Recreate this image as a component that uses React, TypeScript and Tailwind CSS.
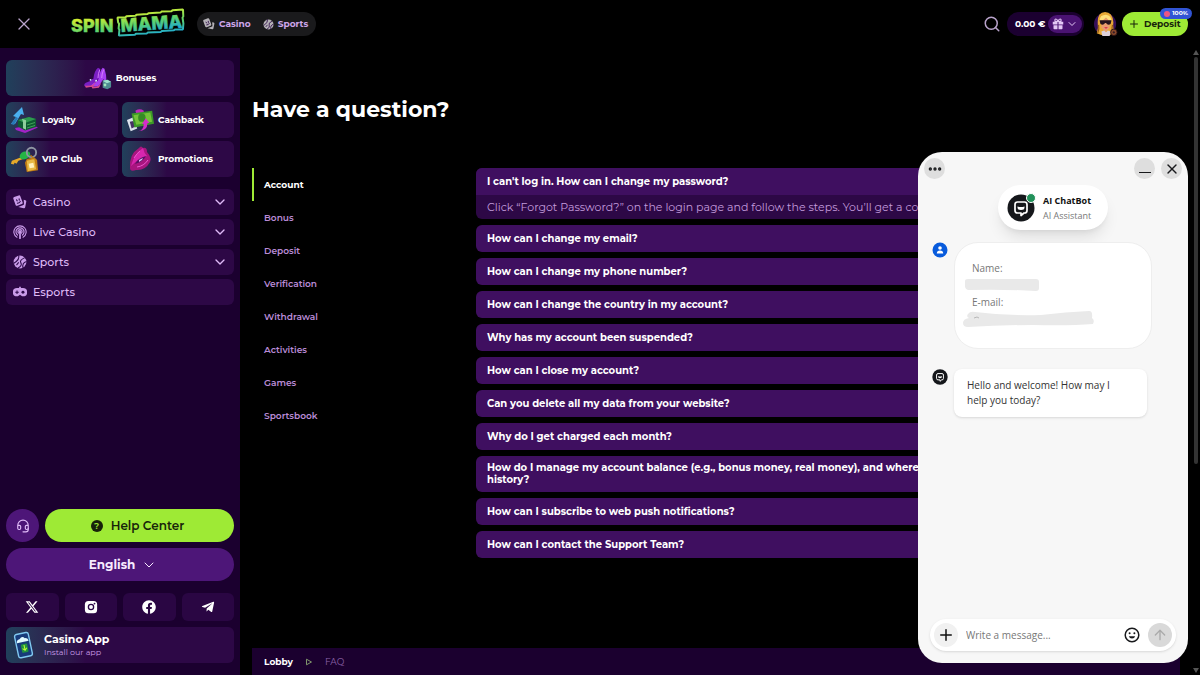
import { useState } from "react";
import { ArrowUp, ChevronDown, Ellipsis, Headset, Plus, Search, X } from "lucide-react";
import { FaTelegramPlane, FaFacebook } from "react-icons/fa";
import { FaXTwitter } from "react-icons/fa6";

type IconProps = { className?: string };

const CardsIcon = ({ className }: IconProps) => (
  <svg viewBox="0 0 16 16" className={className} aria-hidden="true">
    <rect x="1.5" y="1" width="8.5" height="10.5" rx="1.5" transform="rotate(-20 6 6.5)" fill="currentColor" />
    <path d="M12.2 5.5l2 .4a1.300 1.300 0 0 1 1 1.600l-1.300 6.500a1.300 1.300 0 0 1-1.600 1l-6.300-1.300 5.200-1.900a2 2 0 0 0 1.300-2.600z" fill="currentColor" />
    <path d="M4 5.500l.8 1.200M7 4.400l.2 1.500M5 9.300q2.400.2 3.400-2" stroke="#2a0747" strokeWidth="1.2" strokeLinecap="round" fill="none" />
  </svg>
);

const LiveIcon = ({ className }: IconProps) => (
  <svg viewBox="0 0 16 16" className={className} fill="none" stroke="currentColor" strokeWidth="1.3" strokeLinecap="round" aria-hidden="true">
    <path d="M4.500 14A7 7 0 1 1 11.500 14" />
    <path d="M5.200 11.500A4.600 4.600 0 1 1 10.800 11.500" />
    <path d="M6.400 9.300A2.400 2.400 0 1 1 9.600 9.300" />
    <circle cx="8" cy="7.6" r="1" fill="currentColor" />
    <path d="M8 8.500V15" strokeWidth="2" />
  </svg>
);

const BallIcon = ({ className }: IconProps) => (
  <svg viewBox="0 0 16 16" className={className} aria-hidden="true">
    <circle cx="8" cy="8" r="7.3" fill="currentColor" />
    <path d="M6.500.5Q8 5 1 9.500M13.500 3Q7 6 9 9T5.500 15M15.500 7.500Q10 9 11.500 15M6.500 8.500l-2.500 3" stroke="#2a0747" strokeWidth="1.2" fill="none" />
  </svg>
);

const EsportsIcon = ({ className }: IconProps) => (
  <svg viewBox="0 0 16 16" className={className} aria-hidden="true">
    <path d="M4.500 3.500h7a4.700 4.700 0 0 1 0 9.400c-1.500 0-2.500-.8-3.500-1.800-1 1-2 1.800-3.500 1.800a4.700 4.700 0 0 1 0-9.400z" fill="currentColor" />
    <path d="M7 3.700V2h2v1.700" fill="currentColor" />
    <path d="M4.600 6.200v4M2.600 8.200h4" stroke="#2a0747" strokeWidth="1.2" />
    <circle cx="11.4" cy="8.2" r="1.7" fill="#2a0747" />
  </svg>
);

const GiftIcon = ({ className }: IconProps) => (
  <svg viewBox="0 0 16 16" className={className} fill="currentColor" aria-hidden="true">
    <path d="M1 5h6.300v3.600H1zM8.700 5H15v3.600H8.700zM2 9.700h5.300V15H3a1 1 0 0 1-1-1zM8.700 9.700H14V14a1 1 0 0 1-1 1H8.700z" />
    <path d="M8 4.500Q7 1.200 5.200 1.200T4 4.500zM8 4.500q1-3.300 2.800-3.300T12 4.500z" fill="none" stroke="currentColor" strokeWidth="1.4" />
  </svg>
);

const ShoesIcon = ({ className }: IconProps) => (
  <svg viewBox="0 0 30 24" className={className} aria-hidden="true">
    <path d="M10 13Q11 4 15 1l2 1q1 6 1 14l-1 5h-1l-1-8-5 7-9 1q-2-2 1-4 5-1 7-4z" fill="#7b1fc4" />
    <path d="M16 13q1-9 4-12l2 1q2 6 2 13l-1 6h-1l-1-8-6 8-7 .5q-1-2 2-4 4-1 6-4.500z" fill="#a63df0" />
    <path d="M1 20q5 1 9-1l3-4-3 6-8 1.500zM8 21q5 1 8-1l3-4-3 6.500-7 .8z" fill="#d3488e" />
    <path d="M17 3q-2 4-2 9M21 3q-2 5-2 9" stroke="#df8cff" strokeWidth=".9" fill="none" />
    <circle cx="7" cy="14" r="1" fill="#d8eaff" />
    <circle cx="13" cy="15" r="1" fill="#d8eaff" />
    <path d="M20 15l5-1 4 2v6l-4 2-5-1.500z" fill="#4e8c91" />
    <path d="M20 15l5-1 4 2-4.500 1.500z" fill="#9de0cd" />
    <circle cx="22.5" cy="19.5" r="1.5" fill="#a2e7bf" />
  </svg>
);

const LoyaltyIcon = ({ className }: IconProps) => (
  <svg viewBox="0 0 28 28" className={className} aria-hidden="true">
    <path d="M5 22l17-3 6 2.500-13 5.500-9-3z" fill="#a322c7" />
    <path d="M1 18l5-7-3-1 9-9 2 8-3-1-6 10z" fill="#4ab0ee" />
    <path d="M1 18l5-7 2 1-4 7z" fill="#2879b5" />
    <path d="M8 14l11-3 7 2v8l-11 3.500-7-4z" fill="#0e5c32" />
    <path d="M8 14l11-3 7 2-11 4z" fill="#2f9a50" />
    <path d="M17 19l8-2.500M17 22l8-2.500" stroke="#43a35b" />
    <path d="M12 12.800l4 1.500v9.500l-3-1.500V16z" fill="#8fcf9c" />
  </svg>
);

const CashbackIcon = ({ className }: IconProps) => (
  <svg viewBox="0 0 30 26" className={className} aria-hidden="true">
    <path d="M1 13l7-3 4 12-7 3z" fill="#dde4ee" />
    <path d="M4 15l4-1 2 6-4 2z" fill="#463265" />
    <path d="M10 3q5-3 9 0v3h-8z" fill="#bf28bd" />
    <path d="M6 6l22-3 2 14-21 4z" fill="#3c9a27" />
    <path d="M8 8l18-3 2 10-17 3z" fill="#74c23a" />
    <ellipse cx="17" cy="10.5" rx="4" ry="4.5" fill="#368b25" />
    <path d="M13 25q6-1 6-8l-2 .5 4-6.500 4 5-2 .5q0 8-10 8.500z" fill="#d52ccb" />
  </svg>
);

const KeyIcon = ({ className }: IconProps) => (
  <svg viewBox="0 0 30 28" className={className} aria-hidden="true">
    <path d="M12 12L2 16l-1 3 3 1 1-2 2 1 2-3 5-2z" fill="#e5a92a" />
    <ellipse cx="16" cy="10" rx="6" ry="4" transform="rotate(-24 16 10)" fill="#24b545" />
    <circle cx="23" cy="7" r="5" fill="none" stroke="#8f96a3" strokeWidth="2" />
    <path d="M18 14l8-2 3 3 1 11-12 2-2-10z" fill="#c07c14" />
    <path d="M18 16l8-2 2 11-9 2z" fill="#e8b944" />
    <path d="M20 19l5-1 1 5-5 1z" fill="#fff1bd" />
    <path d="M22 10l4 4" stroke="#b97c1a" strokeWidth="1.5" />
  </svg>
);

const LipsIcon = ({ className }: IconProps) => (
  <svg viewBox="0 0 24 28" className={className} aria-hidden="true">
    <path d="M2 23Q1 9 11 3q2-3 4 0 4-1 4 4 5 6 3 10Q17 26 8 25q-6 2-6-2z" fill="#a8157f" />
    <path d="M3 21Q6 9 15 3q1 5 4 8-8 2-16 10z" fill="#d626ae" />
    <path d="M7 19Q10 13 18 11q-2 5-11 8z" fill="#561064" />
    <path d="M11 15l4-2-1 2-3 2z" fill="#dcb5f3" />
    <path d="M9 22q7-1 11-7M6 13q3-5 6-7" stroke="#ec58cf" strokeWidth="1" fill="none" />
  </svg>
);

const PhoneIcon = ({ className }: IconProps) => (
  <svg viewBox="0 0 22 26" className={className} aria-hidden="true">
    <g transform="rotate(-12 11 13)">
      <rect x="4" y="2" width="13" height="22" rx="2" fill="#173b7a" stroke="#80c9f0" strokeWidth="1.3" />
      <path d="M5 10q0-3 3-3 3-3 5 0 3 0 3 3z" fill="#e0faff" />
      <rect x="8" y="12" width="6" height="8" rx="1" fill="#239240" />
      <path d="M11 13v5M9 16l2 2 2-2" stroke="#bcff36" fill="none" />
    </g>
  </svg>
);

const AvatarIcon = ({ className }: IconProps) => (
  <svg viewBox="0 0 26 26" className={className} aria-hidden="true">
    <circle cx="12" cy="13" r="12" fill="#35105a" />
    <path d="M3 23Q5 18 4 11 4 0 12 0t9 11q-1 7 2 11l-6 3H8z" fill="#e8a936" />
    <path d="M8 9q4-5 9 0v8l-4 4h-1l-4-4z" fill="#e89b70" />
    <path d="M6 10Q6 3 13 3q6 1 6 7-4-1-6-4-2 3-7 4z" fill="#ffe07b" />
    <path d="M6 9h13l-1 4q-3 2-5-1h-1q-2 3-5 1z" fill="#25131d" />
    <path d="M11 16.500h4l-1.500 1.500h-1z" fill="#d51b4a" />
    <path d="M8 21l3-1 2 2 2-2 3 1-1 5H9z" fill="#ddd1db" />
    <path d="M5 14q1 5-1 9M20 14q-1 4 0 6" stroke="#8a5314" strokeWidth="1.2" fill="none" />
    <circle cx="21.5" cy="22" r="3.5" fill="#8a4a2a" stroke="#2b1217" />
    <path d="M20 22l1.500-1.500L23 22l-1.500 1.500z" fill="#381c24" />
  </svg>
);

const InstagramIcon = ({ className }: IconProps) => (
  <svg viewBox="0 0 16 16" className={className} aria-hidden="true">
    <rect x="1" y="1" width="14" height="14" rx="4" fill="white" />
    <circle cx="8" cy="8" r="3" fill="none" stroke="#2a0747" strokeWidth="1.5" />
    <circle cx="12" cy="4" r="1" fill="#2a0747" />
  </svg>
);

const SmileIcon = ({ className }: IconProps) => (
  <svg viewBox="0 0 16 16" className={className} aria-hidden="true">
    <circle cx="8" cy="8" r="6.8" fill="none" stroke="currentColor" strokeWidth="1.5" />
    <circle cx="5.6" cy="6.3" r="1" fill="currentColor" />
    <circle cx="10.4" cy="6.3" r="1" fill="currentColor" />
    <path d="M4.800 9.300h6.400q-.7 2.300-3.200 2.300T4.800 9.300z" fill="currentColor" />
  </svg>
);

const BotIcon = ({ className }: IconProps) => (
  <svg viewBox="0 0 28 28" className={className} aria-hidden="true">
    <circle cx="14" cy="14" r="13.5" fill="#15171b" />
    <path d="M10.500 8h7q2.500 0 2.500 2.500v6q0 2.500-2.500 2.500H17l-3 2.500V19h-3.500Q8 19 8 16.500v-6Q8 8 10.500 8z" fill="none" stroke="white" strokeWidth="1.7" strokeLinejoin="round" />
    <path d="M10.500 12.500q3.500 1.200 7 0v1q0 2.500-3.500 2.500t-3.500-2.500z" fill="white" />
  </svg>
);

const Logo = () => (
  <svg viewBox="0 0 116 32" className="h-8 w-[116px]" role="img" aria-label="Spinmama">
    <defs>
      <linearGradient id="logo" x1="60" y1="2" x2="64" y2="32" gradientUnits="userSpaceOnUse">
        <stop offset=".1" stopColor="#e0f02a" />
        <stop offset=".6" stopColor="#5fd46a" />
        <stop offset="1" stopColor="#1ba8d8" />
      </linearGradient>
    </defs>
    <g fill="url(#logo)" stroke="url(#logo)" strokeWidth=".4" fontFamily="Inter, sans-serif" fontWeight="800">
      <text x="1" y="26" fontSize="18">SPIN</text>
      <text x="51" y="26" transform="rotate(-4 51 26)" fontSize="18">MAMA</text>
    </g>
    <path
      d="M47.500 11.500l8-.3 1-1 9-.5 1-1 11-.6 1-.9 12-.6 1-1 10-.4 1-.9 10.500-.8.300 7-.8 1 .9 6-.5 6-8-.1-1 .9-12 .6-1 1-13 .5-1 1-11 .4-1 .9-16 .9.500-6-.8-1 .5-5-.9-1z"
      fill="none"
      stroke="url(#logo)"
      strokeWidth="2"
      strokeLinejoin="bevel"
    />
  </svg>
);

const promos = [
  { label: "Loyalty", Icon: LoyaltyIcon },
  { label: "Cashback", Icon: CashbackIcon },
  { label: "VIP Club", Icon: KeyIcon },
  { label: "Promotions", Icon: LipsIcon },
];

const menu = [
  { label: "Casino", Icon: CardsIcon, more: true },
  { label: "Live Casino", Icon: LiveIcon, more: true },
  { label: "Sports", Icon: BallIcon, more: true },
  { label: "Esports", Icon: EsportsIcon, more: false },
];

const socials = [
  { label: "X", Icon: FaXTwitter },
  { label: "Instagram", Icon: InstagramIcon },
  { label: "Facebook", Icon: FaFacebook },
  { label: "Telegram", Icon: FaTelegramPlane },
];

const topics = ["Account", "Bonus", "Deposit", "Verification", "Withdrawal", "Activities", "Games", "Sportsbook"];

const questions = [
  "How can I change my email?",
  "How can I change my phone number?",
  "How can I change the country in my account?",
  "Why has my account been suspended?",
  "How can I close my account?",
  "Can you delete all my data from your website?",
  "Why do I get charged each month?",
  "How do I manage my account balance (e.g., bonus money, real money), and where can I see my transaction\nhistory?",
  "How can I subscribe to web push notifications?",
  "How can I contact the Support Team?",
];

const Header = () => (
  <header className="flex h-12 shrink-0 items-center pr-3 pl-3.5">
    <button aria-label="Close menu" className="text-[#b9a3cb]">
      <X className="size-5" strokeWidth={1.5} />
    </button>
    <a href="#" className="-mt-1 ml-9">
      <Logo />
    </a>
    <nav className="ml-[11px] flex h-6 items-center gap-3 rounded-full bg-[#1a1a1c] pr-2 pl-1.5 text-[9px] font-bold text-[#cda6ea]">
      <a href="#" className="flex items-center gap-1">
        <CardsIcon className="size-3 text-[#b5b2b7]" />
        Casino
      </a>
      <a href="#" className="flex items-center gap-1">
        <BallIcon className="size-[11px] text-[#b5b2b7]" />
        Sports
      </a>
    </nav>
    <div className="ml-auto flex items-center">
      <button aria-label="Search" className="text-[#b9a3cb]">
        <Search className="size-[18px]" />
      </button>
      <div className="ml-1.5 flex h-6 w-[77px] items-center justify-between rounded-full bg-[#1b0030] pr-0.5 pl-2 text-[9px] font-bold text-white">
        0.00 €
        <button aria-label="Wallet" className="flex h-[18px] items-center gap-0.5 rounded-full bg-[#4a1372] px-1 text-[#e3c8f5]">
          <GiftIcon className="size-3" />
          <ChevronDown className="size-3" />
        </button>
      </div>
      <button aria-label="Profile" className="ml-2.5">
        <AvatarIcon className="size-6" />
      </button>
      <button className="relative ml-1 flex h-6 w-[66px] items-center gap-1 rounded-full bg-[#9eea35] pl-1.5 text-[9px] font-bold text-[#17230a]">
        <Plus className="size-3" />
        Deposit
        <span className="absolute -top-1 -right-1 flex h-[11px] items-center gap-0.5 rounded-full bg-[#3154d4] px-1 text-[6px] text-white">
          <span className="size-1.5 rounded-sm bg-[#ed5583]" />
          100%
        </span>
      </button>
    </div>
  </header>
);

const Sidebar = () => (
  <aside className="flex w-60 shrink-0 flex-col bg-[#1b002f] px-1.5 pt-3 pb-3">
    <a href="#" className="flex h-9 items-center justify-center gap-1 rounded-md bg-linear-to-r from-[#20405b] to-[#2d0846] to-35% text-[9px] font-bold text-white">
      <ShoesIcon className="h-6 w-7" />
      Bonuses
    </a>
    <div className="mt-1.5 grid grid-cols-2 gap-x-1 gap-y-[3px]">
      {promos.map(({ label, Icon }) => (
        <a
          key={label}
          href="#"
          className="flex h-9 items-center gap-1 rounded-md bg-linear-to-r from-[#20405b] to-[#2d0846] to-40% pl-1 text-[9px] font-bold text-white"
        >
          <Icon className="h-7 w-7" />
          {label}
        </a>
      ))}
    </div>
    <nav className="mt-3 flex flex-col gap-1 text-[11px] font-medium text-[#dfbaf7]">
      {menu.map(({ label, Icon, more }) => (
        <a key={label} href="#" className="flex h-[26px] items-center gap-1.5 rounded-md bg-[#2d0846] pr-1.5 pl-[7px]">
          <Icon className="size-[14px] text-[#c99be8]" />
          {label}
          {more && <ChevronDown className="ml-auto size-4" />}
        </a>
      ))}
    </nav>
    <div className="mt-auto flex gap-1.5">
      <button aria-label="Support" className="flex size-[33px] items-center justify-center rounded-full bg-[#4d1678] text-[#dfbaf7]">
        <Headset className="size-[14px]" />
      </button>
      <a href="#" className="flex h-[33px] flex-1 items-center justify-center gap-2 rounded-full bg-[#9eea35] pr-1 text-xs font-semibold text-[#17230a]">
        <span className="flex size-3 items-center justify-center rounded-full bg-[#17230a] text-[9px] text-[#9eea35]">?</span>
        Help Center
      </a>
    </div>
    <button className="mt-1.5 flex h-[33px] items-center justify-center gap-1.5 rounded-full bg-[#4d1678] pl-1.5 text-xs font-bold text-[#f7eaff]">
      English
      <ChevronDown className="size-4" strokeWidth={1.5} />
    </button>
    <div className="mt-3 grid grid-cols-4 gap-1.5">
      {socials.map(({ label, Icon }) => (
        <a key={label} href="#" aria-label={label} className="flex h-7 items-center justify-center rounded-md bg-[#2a0643] text-white">
          <Icon className="size-[14px]" />
        </a>
      ))}
    </div>
    <a href="#" className="mt-1.5 flex h-9 items-center gap-2 rounded-md bg-linear-to-r from-[#20405b] to-[#2d0846] to-35% pl-1.5">
      <PhoneIcon className="h-7 w-6" />
      <span className="flex flex-col text-[8px] leading-3 text-[#c99be8]">
        <strong className="text-[11px] leading-[14px] font-bold text-white">Casino App</strong>
        Install our app
      </span>
    </a>
  </aside>
);

const Faq = () => {
  const [topic, setTopic] = useState("Account");
  return (
    <main className="flex min-w-0 flex-1 flex-col overflow-hidden px-3">
      <h1 className="mt-11 text-[22px] leading-9 font-bold text-white">Have a question?</h1>
      <div className="mt-10 flex">
        <div className="flex w-56 shrink-0 flex-col">
          {topics.map((t) => (
            <button
              key={t}
              onClick={() => setTopic(t)}
              className={`h-[33px] border-l-2 pl-2.5 text-left text-[9px] ${
                t === topic ? "border-[#9eea35] font-bold text-white" : "border-transparent font-semibold text-[#b98bd6]"
              }`}
            >
              {t}
            </button>
          ))}
        </div>
        <div className="flex min-w-0 flex-1 flex-col gap-1.5 text-[10px] leading-3 font-bold text-white">
          <section className="overflow-hidden rounded-md bg-[#2d0846]">
            <button className="h-[27px] w-full bg-[#3f0f60] px-[11px] text-left">I can't log in. How can I change my password?</button>
            <p className="px-[11px] py-1.5 text-[11px] leading-3 font-normal whitespace-nowrap text-[#c39bdc]">
              Click “Forgot Password?” on the login page and follow the steps. You’ll get a confirmation.
            </p>
          </section>
          {questions.map((q) => (
            <button key={q} className="min-h-[27px] rounded-md bg-[#3f0f60] px-[11px] py-1.5 text-left whitespace-pre-line">
              {q}
            </button>
          ))}
        </div>
      </div>
      <nav className="mt-auto flex h-[27px] items-center gap-3 bg-[#1b002f] px-3 text-[9px]">
        <a href="#" className="font-bold text-white">Lobby</a>
        <svg viewBox="0 0 8 8" className="size-2" fill="none" stroke="#80966c" aria-hidden="true">
          <path d="M1.500 1.200L6.500 4 1.500 6.800z" />
        </svg>
        <span className="text-[#8c62a8]">FAQ</span>
      </nav>
    </main>
  );
};

const ScrollBar = () => (
  <div className="flex w-2 shrink-0 flex-col items-center justify-between py-0.5" aria-hidden="true">
    <svg viewBox="0 0 6 5" className="h-[5px] w-1.5" fill="#555">
      <path d="M3 0l3 5H0z" />
    </svg>
    <div className="mt-0.5 w-1 flex-1">
      <div className="h-2/3 rounded-sm bg-[#333]" />
    </div>
    <svg viewBox="0 0 6 5" className="h-[5px] w-1.5" fill="#555">
      <path d="M3 5l3-5H0z" />
    </svg>
  </div>
);

const Chat = () => (
  <section className="absolute right-3 bottom-3 flex h-[511px] w-[270px] flex-col rounded-3xl bg-[#f7f7f7] font-['Open_Sans',sans-serif] text-[#333]">
    <div className="flex gap-1.5 px-1.5 pt-1.5 text-[#18191c]">
      <button aria-label="Options" className="mr-auto flex size-[21px] items-center justify-center rounded-full bg-[#dedede]">
        <Ellipsis className="size-4" strokeWidth={3} />
      </button>
      <button aria-label="Minimize" className="flex size-[21px] items-end justify-center rounded-full bg-[#dedede] pb-1.5">
        <span className="h-px w-3 bg-[#18191c]" />
      </button>
      <button aria-label="Close chat" className="flex size-[21px] items-center justify-center rounded-full bg-[#dedede]">
        <X className="size-4" />
      </button>
    </div>
    <div className="mx-auto mt-1.5 flex h-[45px] w-[110px] items-center gap-2 rounded-3xl bg-white pl-[9px] shadow-lg">
      <div className="relative">
        <BotIcon className="size-7" />
        <span className="absolute -top-px -right-px size-2.5 rounded-full border border-white bg-[#22915a]" />
      </div>
      <div className="text-[9px] leading-[15px] whitespace-nowrap text-[#777]">
        <p className="font-bold text-[#111]">AI ChatBot</p>
        <p>AI Assistant</p>
      </div>
    </div>
    <div className="mt-3 flex items-start gap-1.5 pl-3.5">
      <svg viewBox="0 0 16 16" className="size-4 shrink-0" aria-hidden="true">
        <circle cx="8" cy="8" r="7.5" fill="#085bdc" />
        <circle cx="8" cy="6" r="1.8" fill="white" />
        <path d="M4.800 11.500q0-3 3.200-3t3.200 3z" fill="white" />
      </svg>
      <div className="h-[107px] w-[198px] rounded-3xl border border-[#eee] bg-white px-[17px] pt-[17px] text-[10px] leading-4 text-[#777]">
        <p>Name:</p>
        <svg viewBox="0 0 76 14" className="my-0.5 -ml-2 h-[14px] w-[76px]" aria-hidden="true">
          <path d="M1 3q0-2 3-2h68q3 0 3 3v6q0 3-3 3-34-2-68-1-2 0-3-3z" fill="#e9e9e9" />
        </svg>
        <p>E-mail:</p>
        <svg viewBox="0 0 132 18" className="-ml-2.5 h-[18px] w-[132px]" aria-hidden="true">
          <path d="M6 4q2-3 7-2 32 4 66 3 25-3 48-4 4 0 3 7 3 2 1 6-24 2-60 1-33 0-65 2-5 0-5-4t6-5q-3-1-1-4z" fill="#e9e9e9" />
          <path d="M12 8l3-1 2 1" stroke="#aaa" strokeWidth=".8" fill="none" />
        </svg>
      </div>
    </div>
    <div className="mt-5 flex items-start gap-1.5 pl-3.5">
      <BotIcon className="size-4 shrink-0" />
      <p className="w-[193px] rounded-lg bg-white py-[9px] pr-8 pl-[13px] text-[10px] leading-[15px] shadow-sm">
        Hello and welcome! How may I help you today?
      </p>
    </div>
    <form className="mx-3 mt-auto mb-3 flex h-8 items-center rounded-full bg-white px-1 shadow-sm">
      <button type="button" aria-label="Attach" className="flex size-6 items-center justify-center rounded-full bg-[#f1f1f1] text-[#111]">
        <Plus className="size-[18px]" />
      </button>
      <input aria-label="Message" placeholder="Write a message..." className="ml-2 min-w-0 flex-1 text-[10px] outline-none placeholder:text-[#777]" />
      <button type="button" aria-label="Emoji" className="text-[#18191c]">
        <SmileIcon className="size-4" />
      </button>
      <button aria-label="Send" className="ml-2 flex size-6 items-center justify-center rounded-full bg-[#d9d9d9] text-[#aaa]">
        <ArrowUp className="size-4" />
      </button>
    </form>
  </section>
);

export default function App() {
  return (
    <div className="relative flex h-screen flex-col overflow-hidden bg-black font-['Montserrat','Inter',sans-serif]">
      <Header />
      <div className="flex min-h-0 flex-1">
        <Sidebar />
        <Faq />
        <ScrollBar />
      </div>
      <Chat />
    </div>
  );
}
